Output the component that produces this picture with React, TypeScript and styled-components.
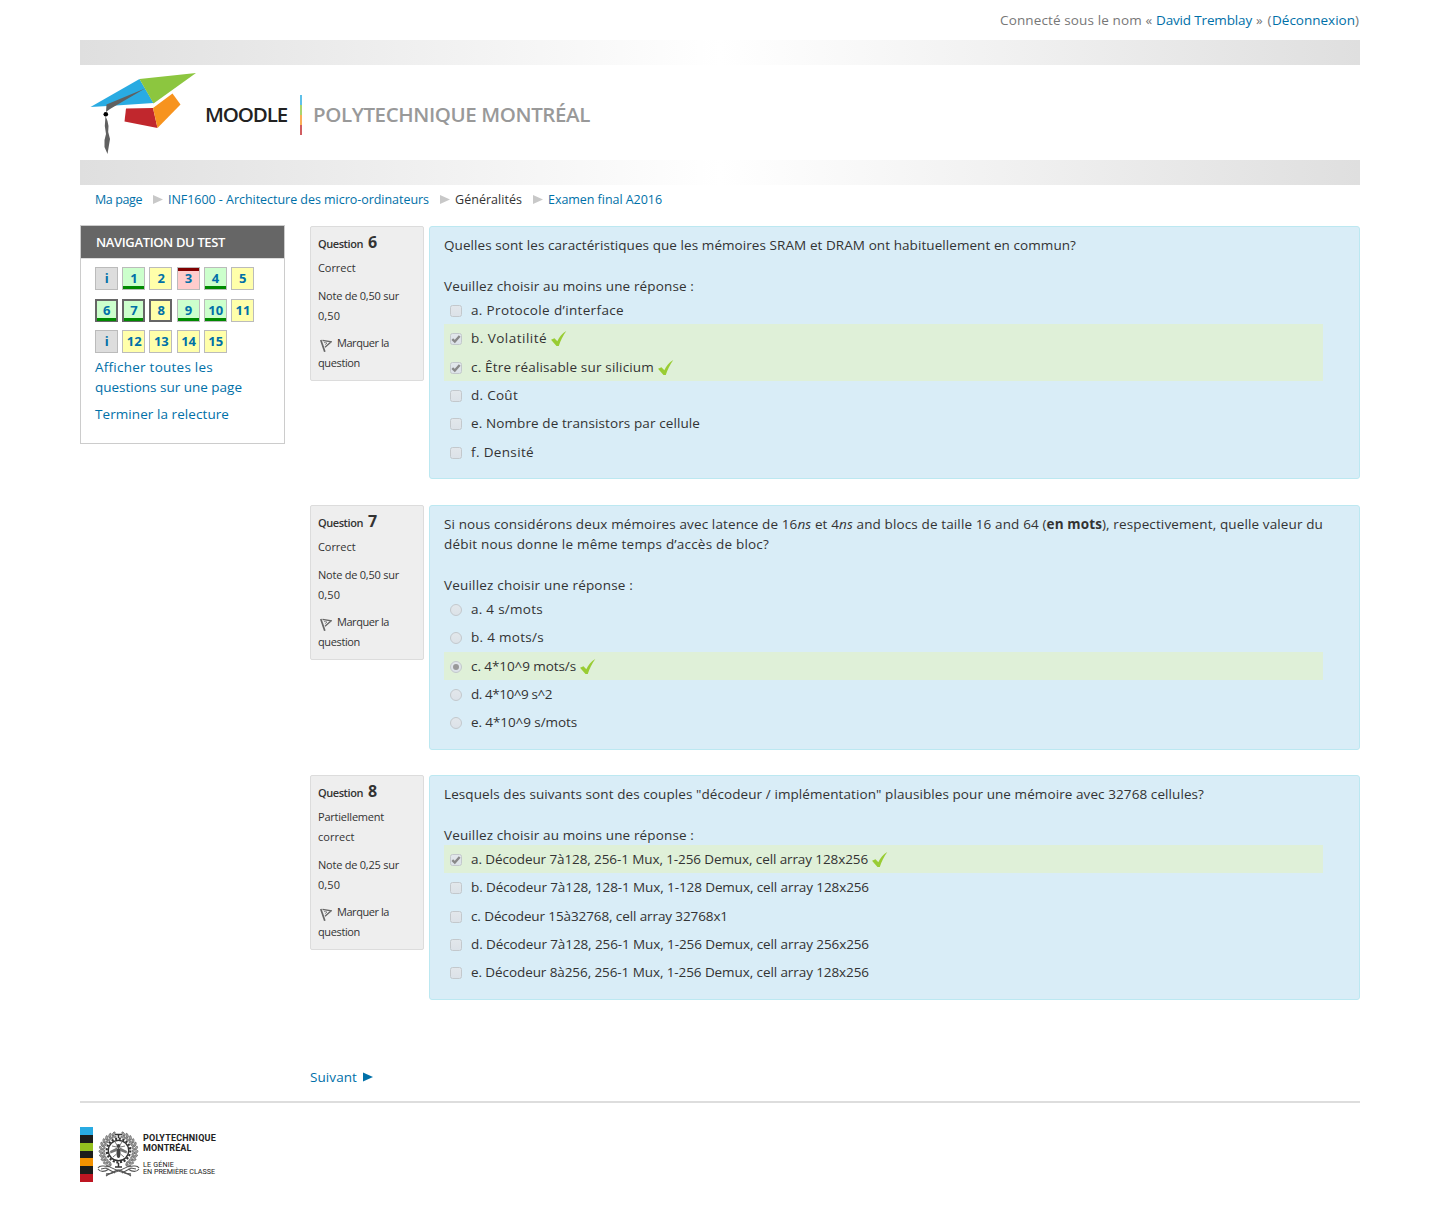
import React, { useLayoutEffect, useRef, useState } from 'react';
import styled, { createGlobalStyle } from 'styled-components';

const Global = createGlobalStyle`
  * { box-sizing: border-box; }
  body { margin: 0; background: #fff; }
  body, input { font-family: "Trebuchet MS", "Open Sans", "Noto Sans", sans-serif; }
`;

const FitSpan = styled.span<{ $w: number }>`
  display: inline-block;
  width: ${(p) => p.$w}px;
  white-space: pre;
`;

/* Spreads a run of text over a fixed measure by adjusting its tracking. */
function Fit({ w, children }: { w: number; children: React.ReactNode }) {
  const inner = useRef<HTMLSpanElement>(null);
  const [track, setTrack] = useState(0);
  useLayoutEffect(() => {
    const el = inner.current;
    if (!el) return;
    const natural = el.getBoundingClientRect().width - track * (el.textContent || '').length;
    setTrack((w - natural) / Math.max(1, (el.textContent || '').length));
  }, [w]);
  return (
    <FitSpan $w={w}>
      <span ref={inner} style={{ letterSpacing: track }}>{children}</span>
    </FitSpan>
  );
}

const Page = styled.div`
  width: 1280px;
  height: 1206px;
  margin: 0 auto;
  color: #333;
  font-size: 13.5px;
  line-height: 20px;
`;

const Login = styled.div`
  height: 40px;
  padding-top: 10px;
  display: flex;
  justify-content: flex-end;
  color: #777;
`;

const Link = styled.a`
  color: #0070a8;
  text-decoration: none;
`;

const Band = styled.div`
  height: 25px;
  background: linear-gradient(to right, #dfdfdf, #fff 50%, #dfdfdf);
`;

const Header = styled.header`
  height: 95px;
  display: flex;
  align-items: center;
  padding-left: 10px;
`;

const Cap = styled.svg`
  width: 106px;
  height: 95px;
  flex: none;
`;

const Wordmark = styled.div<{ $color: string; $left: number }>`
  margin-left: ${(p) => p.$left}px;
  padding-top: 2px;
  color: ${(p) => p.$color};
  font-size: 20.5px;
  line-height: 28px;
  font-weight: 600;
`;

const Divider = styled.div`
  width: 2px;
  height: 40px;
  margin: 4px 0 0 13px;
  opacity: 0.75;
  background: linear-gradient(#29abe2 0 25%, #8cc63f 25% 50%, #f7931e 50% 75%, #c1272d 75%);
`;

const Crumbs = styled.nav`
  height: 40px;
  display: flex;
  align-items: flex-start;
  padding: 5px 0 0 15px;
  font-size: 12.5px;
`;

const CrumbArrow = styled.svg`
  width: 10px;
  height: 9px;
  margin: 5px 5px 0 11px;
  fill: #c8c8c8;
`;

const Columns = styled.div`
  display: flex;
  align-items: flex-start;
  gap: 25px;
  height: 876px;
`;

const Block = styled.aside`
  width: 205px;
  height: 219px;
  border: 1px solid #ccc;
`;

const BlockTitle = styled.h2`
  margin: 0;
  height: 33px;
  padding: 6px 0 0 15px;
  background: #666;
  border-bottom: 1px solid #ddd;
  color: #fff;
  font-size: 13px;
  line-height: 20px;
  font-weight: 600;
`;

const QuizNav = styled.div`
  display: grid;
  grid-template-columns: repeat(6, 23px);
  column-gap: 4.2px;
  row-gap: 8.6px;
  padding: 8px 0 0 14px;
`;

type Mark = 'info' | 'ok' | 'part' | 'bad';
const markBg: Record<Mark, string> = {
  info: '#ddd',
  ok: 'linear-gradient(to top, #008a00 3px, #cfc 3px)',
  part: '#ffa',
  bad: 'linear-gradient(to bottom, #800000 3px, #fcc 3px)',
};

const NavButton = styled.a<{ $mark: Mark; $current?: boolean; $wide?: boolean }>`
  height: 23px;
  display: flex;
  justify-content: center;
  padding-left: ${(p) => (p.$wide ? 1 : 0.6)}px;
  border: ${(p) => (p.$current ? '2px solid #666' : '1px solid #bbb')};
  border-bottom-width: ${(p) => (p.$current && p.$mark !== 'ok' ? 2 : 1)}px;
  background: ${(p) => markBg[p.$mark]};
  color: #0070a8;
  font-size: 13px;
  font-weight: 700;
  line-height: ${(p) => (p.$current ? 19 : 21)}px;
`;

const BlockLinks = styled.div`
  padding: 4px 0 0 14px;
  display: flex;
  flex-direction: column;
`;

const Spaced = styled(Link)`
  margin-top: 7px;
`;

const Main = styled.main`
  width: 1050px;
  padding-top: 1px;
`;

const Question = styled.section<{ $h: number }>`
  display: flex;
  align-items: flex-start;
  gap: 5px;
  height: ${(p) => p.$h}px;
`;

const Info = styled.div`
  width: 114px;
  padding: 6px 7px 7.6px;
  border: 1px solid #dcdcdc;
  border-radius: 2px;
  background: #eee;
  font-size: 11px;
`;

const InfoTitle = styled.h3`
  margin: 0;
  height: 25px;
  display: flex;
  align-items: baseline;
  gap: 5px;
  font-size: 11px;
  line-height: 19px;
  font-weight: 600;
`;

const Num = styled.span`
  font-size: 16px;
  font-weight: 700;
`;

const InfoPara = styled.div`
  margin-bottom: 8px;
  display: flex;
  flex-direction: column;
  &:nth-last-child(2) { margin-bottom: 6.8px; }
  &:last-child { margin-bottom: 0; }
`;

const FlagLine = styled.div`
  display: flex;
  gap: 5px;
`;

const Flag = styled.svg`
  width: 12px;
  height: 13px;
  margin: 6px 0 0 2px;
`;

const Content = styled.div<{ $h: number }>`
  width: 931px;
  height: ${(p) => p.$h}px;
  padding: 8px 36px 0 14px;
  border: 1px solid #bce8f1;
  border-radius: 3px;
  background: #d9edf7;
`;

const Prompt = styled.div`
  padding-top: 21px;
`;

const Answer = styled.label<{ $ok?: boolean }>`
  height: 28.35px;
  display: flex;
  align-items: flex-start;
  padding: 4px 0 0 6px;
  background: ${(p) => (p.$ok ? '#dff0d8' : 'transparent')};
`;

const Control = styled.span<{ $round?: boolean }>`
  width: 12px;
  height: 12px;
  flex: none;
  display: flex;
  align-items: center;
  justify-content: center;
  margin: 5.1px 9px 0 0;
  border: 1px solid #c3c8cc;
  border-radius: ${(p) => (p.$round ? '50%' : '2.5px')};
  background: linear-gradient(#e2e7eb, #dce2e8);
`;

const Dot = styled.span`
  width: 6px;
  height: 6px;
  border-radius: 50%;
  background: #999;
`;

const Right = styled.svg`
  width: 16px;
  height: 16px;
  margin: 3px 0 0 4px;
`;

const NextSpace = styled.div`
  padding-top: 45px;
`;

const Next = styled(Link)`
  display: flex;
  align-items: center;
  gap: 6px;
  padding-top: 22px;
`;

const Rule = styled.div`
  height: 2px;
  background: #ddd;
`;

const Footer = styled.footer`
  display: flex;
  padding-top: 24px;
`;

const Stripes = styled.div`
  width: 13px;
  height: 55px;
  background: linear-gradient(#29abe2 0 14.3%, #1d1d1b 14.3% 28.6%, #95c11f 28.6% 42.9%, #1d1d1b 42.9% 57.2%, #f39200 57.2% 71.5%, #1d1d1b 71.5% 85.8%, #be1622 85.8%);
`;

const Emblem = styled.svg`
  width: 44px;
  height: 50px;
  margin: 4px 2px 0 4px;
`;

const School = styled.div`
  padding-top: 6px;
  font-family: Roboto, "Liberation Sans", sans-serif;
  color: #222;
`;

const SchoolLine = styled.div<{ $size: number; $lh: number; $bold?: boolean; $gap?: number }>`
  margin-top: ${(p) => p.$gap || 0}px;
  font-size: ${(p) => p.$size}px;
  line-height: ${(p) => p.$lh}px;
  font-weight: ${(p) => (p.$bold ? 700 : 400)};
`;

type Ans = { t: string; w: number; on?: boolean };
type Q = {
  n: number; h: number; box: number; radio?: boolean;
  state: [string, number][]; note: string;
  text: React.ReactNode; ask: string; askW: number; answers: Ans[];
};

const questions: Q[] = [
  {
    n: 6, h: 279, box: 253, state: [['Correct', 37.5]], note: 'Note de 0,50 sur',
    text: <Fit w={632}>Quelles sont les caractéristiques que les mémoires SRAM et DRAM ont habituellement en commun?</Fit>,
    ask: 'Veuillez choisir au moins une réponse :', askW: 250,
    answers: [
      { t: 'a. Protocole d’interface', w: 153 },
      { t: 'b. Volatilité', w: 76, on: true },
      { t: 'c. Être réalisable sur silicium', w: 183, on: true },
      { t: 'd. Coût', w: 47 },
      { t: 'e. Nombre de transistors par cellule', w: 229 },
      { t: 'f. Densité', w: 63 },
    ],
  },
  {
    n: 7, h: 270, box: 245, radio: true, state: [['Correct', 37.5]], note: 'Note de 0,50 sur',
    text: (
      <>
        <Fit w={879}>Si nous considérons deux mémoires avec latence de 16<i>ns</i> et 4<i>ns</i> and blocs de taille 16 and 64 (<b>en mots</b>), respectivement, quelle valeur du</Fit>
        <Fit w={325}>débit nous donne le même temps d’accès de bloc?</Fit>
      </>
    ),
    ask: 'Veuillez choisir une réponse :', askW: 189,
    answers: [
      { t: 'a. 4 s/mots', w: 72 },
      { t: 'b. 4 mots/s', w: 73 },
      { t: 'c. 4*10^9 mots/s', w: 105, on: true },
      { t: 'd. 4*10^9 s^2', w: 81 },
      { t: 'e. 4*10^9 s/mots', w: 106 },
    ],
  },
  {
    n: 8, h: 225, box: 225, state: [['Partiellement', 66], ['correct', 36.5]], note: 'Note de 0,25 sur',
    text: <Fit w={760}>Lesquels des suivants sont des couples "décodeur / implémentation" plausibles pour une mémoire avec 32768 cellules?</Fit>,
    ask: 'Veuillez choisir au moins une réponse :', askW: 250,
    answers: [
      { t: 'a. Décodeur 7à128, 256-1 Mux, 1-256 Demux, cell array 128x256', w: 397, on: true },
      { t: 'b. Décodeur 7à128, 128-1 Mux, 1-128 Demux, cell array 128x256', w: 398 },
      { t: 'c. Décodeur 15à32768, cell array 32768x1', w: 257 },
      { t: 'd. Décodeur 7à128, 256-1 Mux, 1-256 Demux, cell array 256x256', w: 398 },
      { t: 'e. Décodeur 8à256, 256-1 Mux, 1-256 Demux, cell array 128x256', w: 398 },
    ],
  },
];

const navItems: [string, Mark, boolean?][] = [
  ['i', 'info'], ['1', 'ok'], ['2', 'part'], ['3', 'bad'], ['4', 'ok'], ['5', 'part'],
  ['6', 'ok', true], ['7', 'ok', true], ['8', 'part', true], ['9', 'ok'], ['10', 'ok'], ['11', 'part'],
  ['i', 'info'], ['12', 'part'], ['13', 'part'], ['14', 'part'], ['15', 'part'],
];

const Arrow = () => <CrumbArrow viewBox="0 0 10 9"><path d="M0 0L10 4.5L0 9Z" /></CrumbArrow>;

function EmblemArt() {
  const leaves = Array.from({ length: 11 }, (_, i) => 106 + i * 13);
  return (
    <Emblem viewBox="0 0 44 50" fill="none" stroke="#555">
      <circle cx="21.5" cy="19.500" r="10.200" stroke="#333" strokeWidth="1.300" />
      <circle cx="21.5" cy="19.500" r="11.800" stroke="#333" strokeWidth="2.200" strokeDasharray="2.100 1.600" />
      <path d="M18 3.500H25M21.500 3.500V7M18 36H25M21.500 32V36" stroke="#333" strokeWidth="1.500" />
      {[1, -1].map((s) => (
        <g key={s} transform={s === 1 ? undefined : 'translate(43 0) scale(-1 1)'}>
          {leaves.map((a) => {
            const r = (a * Math.PI) / 180;
            const c = Math.cos(r);
            const n = Math.sin(r);
            return (
              <g key={a} fill="#aaa" strokeWidth="0.6">
                <ellipse cx={21.5 + 17.8 * c} cy={20 - 17.8 * n} rx="2.3" ry="1" transform={`rotate(${50 - a} ${21.5 + 17.8 * c} ${20 - 17.8 * n})`} />
                <ellipse cx={21.5 + 15 * c} cy={20 - 15 * n} rx="2.1" ry="0.8" transform={`rotate(${125 - a} ${21.5 + 15 * c} ${20 - 15 * n})`} />
              </g>
            );
          })}
          <path d="M1 37C3 33 7 36 10 35C15 36 20 41 31 43L34 45M1 38C4 42 9 40 12 38M4 38L9 37L18 42" strokeWidth="1.1" />
          <path d="M9 43C14 44 18 39 21.500 39" strokeWidth="1.500" />
        </g>
      ))}
      <g fill="#444" stroke="none">
        <ellipse cx="21.5" cy="22" rx="2" ry="5" />
        <circle cx="21.5" cy="15" r="2" />
        <path d="M20 16.500L13 20L13.500 22.500L20 20ZM23 16.500L30 20L29.500 22.500L23 20Z" fill="#777" />
      </g>
      <path d="M20 14L18 11M23 14L25 11M19.5 23L16 26M23.500 23L27 26M19.500 16L15 15M23.500 16L28 15" strokeWidth="0.8" />
    </Emblem>
  );
}

export default function App() {
  return (
    <Page>
      <Global />
      <Login>
        <Fit w={156}>{'Connecté sous le nom « '}</Fit>
        <Link><Fit w={96}>David Tremblay</Fit></Link>
        <Fit w={20}>{' » ('}</Fit>
        <Link><Fit w={83}>Déconnexion</Fit></Link>
        <Fit w={5}>)</Fit>
      </Login>
      <Band />
      <Header>
        <Cap viewBox="90 65 106 95">
          <path fill="#29abe2" d="M90.500 107L139.500 79L153.500 103L116 105.500Z" />
          <path fill="#8cc63f" d="M139.500 79L196 73L153.500 103.500Z" />
          <path fill="#c1272d" d="M126 108.500L153 108L157.500 128L124.500 121.500Z" />
          <path fill="#f7931e" d="M153 108L172.500 93.500L180.500 104.500L157.500 128Z" />
          <path fill="#606060" d="M145 88.500L106.500 104.500L106 112L110 109ZM105.500 116L107.500 121L108.500 126L108.200 132L110 139L107.500 154L104.500 147L104.500 140L106 134L104.800 126Z" />
          <circle cx="105.800" cy="114.200" r="2.300" fill="#000" />
        </Cap>
        <Wordmark $color="#222" $left={9}><Fit w={82}>MOODLE</Fit></Wordmark>
        <Divider />
        <Wordmark $color="#999" $left={11}><Fit w={277}>POLYTECHNIQUE MONTRÉAL</Fit></Wordmark>
      </Header>
      <Band />
      <Crumbs>
        <Link><Fit w={47}>Ma page</Fit></Link><Arrow />
        <Link><Fit w={261}>INF1600 - Architecture des micro-ordinateurs</Fit></Link><Arrow />
        <Fit w={67}>Généralités</Fit><Arrow />
        <Link><Fit w={114}>Examen final A2016</Fit></Link>
      </Crumbs>
      <Columns>
        <Block>
          <BlockTitle><Fit w={129}>NAVIGATION DU TEST</Fit></BlockTitle>
          <QuizNav>
            {navItems.map(([label, mark, current], i) => (
              <NavButton key={i} $mark={mark} $current={current} $wide={label.length > 1}>{label}</NavButton>
            ))}
          </QuizNav>
          <BlockLinks>
            <Link><Fit w={118}>Afficher toutes les</Fit></Link>
            <Link><Fit w={147}>questions sur une page</Fit></Link>
            <Spaced><Fit w={134}>Terminer la relecture</Fit></Spaced>
          </BlockLinks>
        </Block>
        <Main>
          {questions.map((q) => (
            <Question key={q.n} $h={q.h}>
              <Info>
                <InfoTitle><Fit w={45}>Question</Fit><Num>{q.n}</Num></InfoTitle>
                <InfoPara>{q.state.map(([t, w]) => <Fit key={t} w={w}>{t}</Fit>)}</InfoPara>
                <InfoPara><Fit w={81}>{q.note}</Fit><Fit w={22}>0,50</Fit></InfoPara>
                <InfoPara>
                  <FlagLine>
                    <Flag viewBox="0 0 12 13" fill="none" stroke="#666">
                      <path d="M0.800 1L4.800 12.800" strokeWidth="1.700" />
                      <path d="M2.500 1.300L11.200 2.800L5 8.300" strokeWidth="1.300" />
                      <path d="M4 3.500L7 4L5.200 5.800" strokeWidth="0.700" />
                    </Flag>
                    <Fit w={52}>Marquer la</Fit>
                  </FlagLine>
                  <Fit w={42}>question</Fit>
                </InfoPara>
              </Info>
              <Content $h={q.box}>
                {q.text}
                <Prompt><Fit w={q.askW}>{q.ask}</Fit></Prompt>
                {q.answers.map((a) => (
                  <Answer key={a.t} $ok={a.on}>
                    <Control $round={q.radio}>
                      {a.on && (q.radio ? <Dot /> : (
                        <svg width="10" height="10" viewBox="0 0 10 10"><path d="M1.300 5.200L3.800 7.600L8.700 2" fill="none" stroke="#888" strokeWidth="2.400" /></svg>
                      ))}
                    </Control>
                    <Fit w={a.w}>{a.t}</Fit>
                    {a.on && (
                      <Right viewBox="0 0 16 16"><path fill="#9c3" d="M0 8.800L3.500 7.300L6.300 10.300C8.300 6.300 11 2.500 15.300 0C12 4.800 9.500 9.300 7.800 15L5.500 15Z" /></Right>
                    )}
                  </Answer>
                ))}
              </Content>
            </Question>
          ))}
          <NextSpace>
            <Next>
              <Fit w={47}>Suivant</Fit>
              <svg width="10" height="10" viewBox="0 0 10 10"><path d="M0 0.500L10 5L0 9.500Z" fill="#0070a8" /></svg>
            </Next>
          </NextSpace>
        </Main>
      </Columns>
      <Rule />
      <Footer>
        <Stripes />
        <EmblemArt />
        <School>
          <SchoolLine $size={9} $lh={10} $bold><Fit w={73}>POLYTECHNIQUE</Fit></SchoolLine>
          <SchoolLine $size={9} $lh={10} $bold><Fit w={48.500}>MONTRÉAL</Fit></SchoolLine>
          <SchoolLine $size={7.200} $lh={7} $gap={8}><Fit w={31}>LE GÉNIE</Fit></SchoolLine>
          <SchoolLine $size={7.200} $lh={7}><Fit w={72}>EN PREMIÈRE CLASSE</Fit></SchoolLine>
        </School>
      </Footer>
    </Page>
  );
}
